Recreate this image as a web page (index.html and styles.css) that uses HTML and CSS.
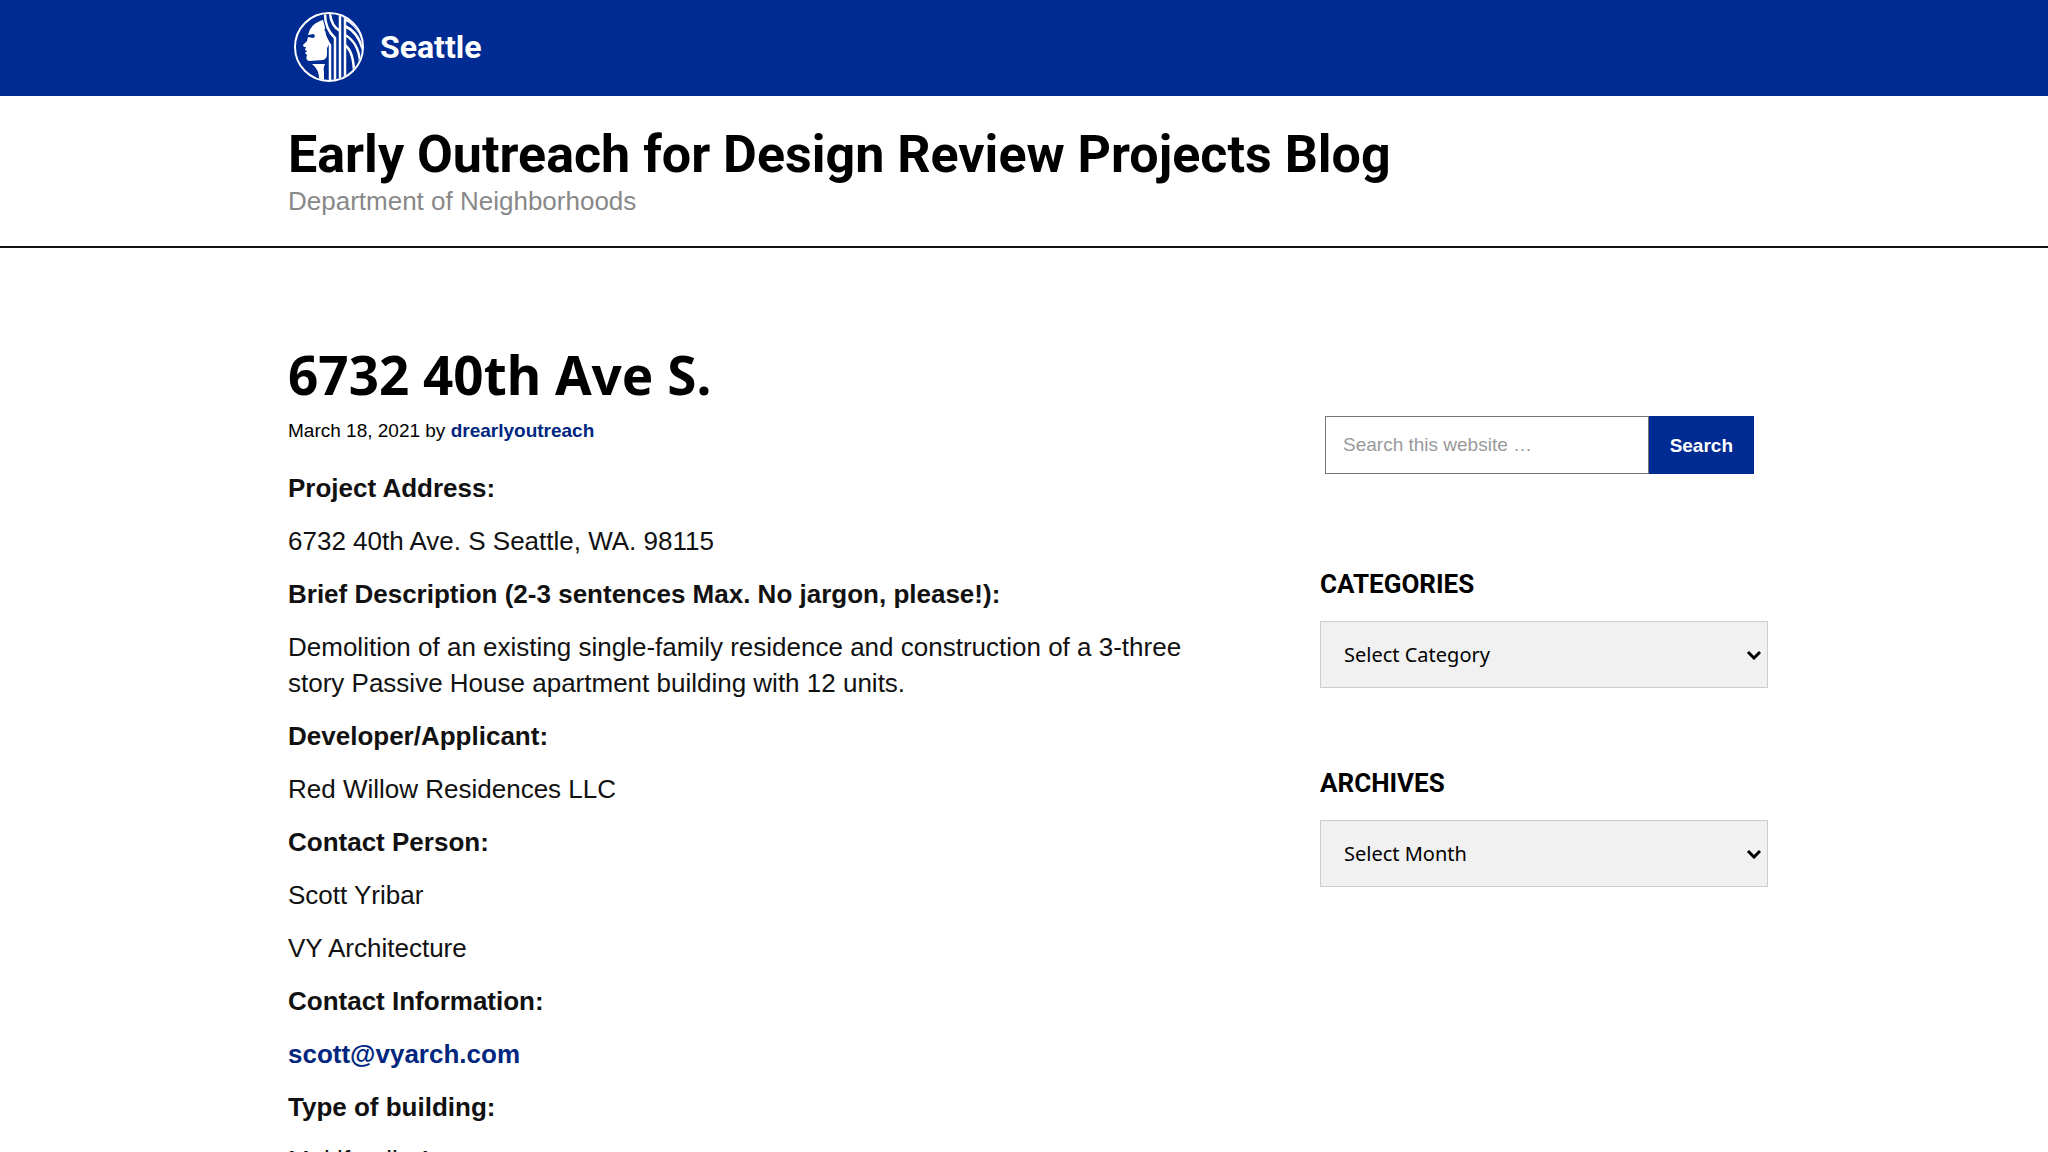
FILE: index.html
```html
<!DOCTYPE html>
<html lang="en">
<head>
<meta charset="utf-8">
<meta name="viewport" content="width=device-width, initial-scale=1">
<title>6732 40th Ave S. - Early Outreach for Design Review Projects Blog</title>
<link rel="stylesheet" href="styles.css">
</head>
<body>
<div class="city-bar">
  <div class="wrap">
    <a class="brand" href="#">
      <svg class="brand-seal" viewBox="0 0 70 70" aria-hidden="true">
        <defs><clipPath id="seal"><circle cx="35" cy="35" r="33"/></clipPath></defs>
        <g clip-path="url(#seal)">
          <path fill="#fff" d="M29 8C22 10 17 14 15 20L14 23L20 22Q22 25 19 26L14 25L13 29L9 33Q9 35 12 35L11 38L13 39L11 41L13 43Q11 48 15 49L29 48Q33 47 33 42V36Q36 33 34 27Q29 22 31 16Q30 11 29 8Z"/>
          <path fill="#fff" d="M18 52H31Q29 56 30 60V70H25Q26 58 18 52Z"/>
          <g fill="none" stroke="#fff" stroke-width="2.5">
            <path d="M31 2Q31 17 41 26V72"/>
            <path d="M36 1Q37 14 46 19"/>
            <path d="M30 19Q31 27 36 33V72"/>
            <path d="M46 0V72M51 0V72"/>
            <path d="M51 7Q62 12 68 25"/>
            <path d="M51 14Q64 20 69 38"/>
            <path d="M51 23Q64 30 66 49"/>
            <path d="M51 33Q60 40 60 62"/>
          </g>
        </g>
        <circle cx="35" cy="35" r="34" fill="none" stroke="#fff" stroke-width="2"/>
      </svg>
      <span>Seattle</span>
    </a>
  </div>
</div>
<header class="site-header">
  <div class="wrap">
    <p class="site-title">Early Outreach for Design Review Projects Blog</p>
    <p class="site-tagline">Department of Neighborhoods</p>
  </div>
</header>
<div class="wrap columns">
  <main class="entry">
    <h1>6732 40th Ave S.</h1>
    <p class="entry-meta">March 18, 2021 by <a href="#">drearlyoutreach</a></p>
    <div class="entry-content">
      <p><strong>Project Address:</strong></p>
      <p>6732 40th Ave. S Seattle, WA. 98115</p>
      <p><strong>Brief Description (2-3 sentences Max. No jargon, please!):</strong></p>
      <p>Demolition of an existing single-family residence and construction of a 3-three story Passive House apartment building with 12 units.</p>
      <p><strong>Developer/Applicant:</strong></p>
      <p>Red Willow Residences LLC</p>
      <p><strong>Contact Person:</strong></p>
      <p>Scott Yribar</p>
      <p>VY Architecture</p>
      <p><strong>Contact Information:</strong></p>
      <p><a href="mailto:scott@vyarch.com">scott@vyarch.com</a></p>
      <p><strong>Type of building:</strong></p>
      <p>Multifamily Apartment</p>
    </div>
  </main>
  <aside class="sidebar">
    <form class="search" role="search">
      <input type="search" placeholder="Search this website …" aria-label="Search this website">
      <button type="submit">Search</button>
    </form>
    <section class="widget">
      <h2><label for="categories">Categories</label></h2>
      <div class="picker">
        <select id="categories"><option>Select Category</option></select>
        <svg viewBox="0 0 16 10" aria-hidden="true"><path d="M2 2L8 8L14 2"/></svg>
      </div>
    </section>
    <section class="widget">
      <h2><label for="archives">Archives</label></h2>
      <div class="picker">
        <select id="archives"><option>Select Month</option></select>
        <svg viewBox="0 0 16 10" aria-hidden="true"><path d="M2 2L8 8L14 2"/></svg>
      </div>
    </section>
  </aside>
</div>
</body>
</html>
```
FILE: styles.css
```css
* { box-sizing: border-box; }
html { overflow-x: hidden; }
body {
  margin: 0;
  background: #fff;
  color: #000;
  font: 26px/36px "Liberation Sans", Arial, sans-serif;
}
p, h1, h2 { margin: 0; }
a { color: #00267f; font-weight: 700; text-decoration: none; }

.wrap { max-width: 1536px; margin: 0 auto; padding: 0 24px 0 32px; }

.city-bar { padding-bottom: 2px; background: #002b92; }
.city-bar .wrap { display: flex; align-items: center; min-height: 94px; }
.brand {
  display: flex;
  align-items: center;
  gap: 16px;
  padding: 0 6px;
  color: #fff;
  font: 700 32px/40px Roboto, sans-serif;
}
.brand-seal { width: 70px; height: 70px; }

.site-header { padding: 28px 0 30px; border-bottom: 2px solid #111; }
.site-title { font: 700 52px/62px Roboto, sans-serif; }
.site-tagline { color: #888; line-height: 30px; }

.columns {
  display: grid;
  grid-template-columns: minmax(0, 900px) 448px;
  justify-content: space-between;
  padding-top: 93px;
}
.entry h1 { font: 700 53px/68px "Noto Sans", sans-serif; }
.entry-meta { margin: 7px 0 24px; font-size: 19px; line-height: 30px; }
.entry-content { color: #111; }
.entry-content p { margin-bottom: 17px; }

.sidebar { padding-top: 75px; }
.search { display: flex; margin-bottom: 90px; padding: 0 14px 0 5px; }
.search input {
  flex: 1;
  min-width: 0;
  height: 58px;
  padding: 0 17px;
  border: 1px solid #777;
  border-radius: 0;
  font: 19px "Liberation Sans", Arial, sans-serif;
  appearance: none;
}
.search input::placeholder { color: #999; opacity: 1; }
.search button {
  padding: 2px 21px 0;
  border: 0;
  background: #002b92;
  color: #fff;
  font: 700 19px "Liberation Sans", Arial, sans-serif;
}

.widget { margin-bottom: 75px; }
.widget h2 {
  margin-bottom: 17px;
  font: 700 26px/40px Roboto, sans-serif;
  text-transform: uppercase;
}
.picker { display: grid; align-items: center; }
.picker select, .picker svg { grid-area: 1 / 1; }
.picker select {
  width: 100%;
  height: 67px;
  padding: 0 23px;
  border: 1px solid #ccc;
  border-radius: 0;
  background: #f1f1f1;
  color: #000;
  font: 20px "Noto Sans", sans-serif;
  appearance: none;
}
.picker svg {
  justify-self: end;
  width: 16px;
  height: 10px;
  margin-right: 6px;
  fill: none;
  stroke: #000;
  stroke-width: 3;
  pointer-events: none;
}
```
